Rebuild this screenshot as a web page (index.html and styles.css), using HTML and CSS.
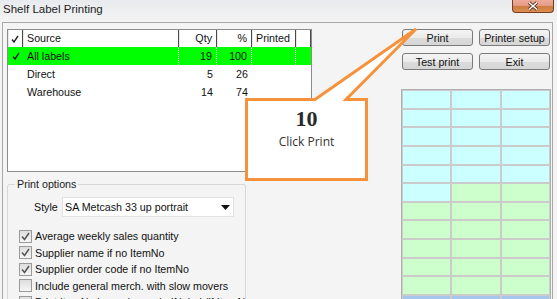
FILE: index.html
```html
<!DOCTYPE html>
<html lang="en">
<head>
  <meta charset="UTF-8" />
  <title>Shelf Label Printing</title>
  <link rel="stylesheet" href="styles.css">
</head>
<body>
  <div class="titlebar">
    <span class="title">Shelf Label Printing</span>
    <span class="close-btn">
      <svg width="12" height="10" viewBox="0 0 12 10">
        <path d="M2 1.5 L10 8.5 M10 1.5 L2 8.5" stroke="#5a3020" stroke-width="3.2" fill="none"/>
        <path d="M2 1.5 L10 8.5 M10 1.5 L2 8.5" stroke="#fff" stroke-width="1.6" fill="none"/>
      </svg>
    </span>
  </div>

  <div class="window">
    <div class="left">
      <div class="listview">
        <div class="lv-row lv-head">
          <div class="cell c-chk"><svg class="tick" width="8" height="8" viewBox="0 0 8 8"><path d="M1 4.5 L3 7 L7 1" stroke="#222" stroke-width="1.4" fill="none"/></svg></div>
          <div class="cell c-src">Source</div>
          <div class="cell c-num">Qty</div>
          <div class="cell c-num">%</div>
          <div class="cell c-prt">Printed</div>
          <div class="cell c-end"></div>
        </div>
        <div class="lv-row sel">
          <div class="cell c-chk"><svg class="tick" width="8" height="8" viewBox="0 0 8 8"><path d="M1 4.5 L3 7 L7 1" stroke="#222" stroke-width="1.4" fill="none"/></svg></div>
          <div class="cell c-src">All labels</div>
          <div class="cell c-num">19</div>
          <div class="cell c-num">100</div>
          <div class="cell c-prt"></div>
          <div class="cell c-end"></div>
        </div>
        <div class="lv-row">
          <div class="cell c-chk"></div>
          <div class="cell c-src">Direct</div>
          <div class="cell c-num">5</div>
          <div class="cell c-num">26</div>
          <div class="cell c-prt"></div>
          <div class="cell c-end"></div>
        </div>
        <div class="lv-row">
          <div class="cell c-chk"></div>
          <div class="cell c-src">Warehouse</div>
          <div class="cell c-num">14</div>
          <div class="cell c-num">74</div>
          <div class="cell c-prt"></div>
          <div class="cell c-end"></div>
        </div>
      </div>

      <fieldset class="group">
        <legend>Print options</legend>
        <div class="style-row">
          <span class="style-label">Style</span>
          <div class="combo">
            <span>SA Metcash 33 up portrait</span>
            <svg width="9" height="5" viewBox="0 0 9 5"><path d="M0 0 H9 L4.5 5 Z" fill="#111"/></svg>
          </div>
        </div>
        <div class="chk-row"><span class="chk"><svg width="11" height="11" viewBox="0 0 11 11"><path d="M2 5.5 L4.5 8.5 L9 2" stroke="#555" stroke-width="1.5" fill="none"/></svg></span>Average weekly sales quantity</div>
        <div class="chk-row"><span class="chk"><svg width="11" height="11" viewBox="0 0 11 11"><path d="M2 5.5 L4.5 8.5 L9 2" stroke="#555" stroke-width="1.5" fill="none"/></svg></span>Supplier name if no ItemNo</div>
        <div class="chk-row"><span class="chk"><svg width="11" height="11" viewBox="0 0 11 11"><path d="M2 5.5 L4.5 8.5 L9 2" stroke="#555" stroke-width="1.5" fill="none"/></svg></span>Supplier order code if no ItemNo</div>
        <div class="chk-row"><span class="chk"></span>Include general merch. with slow movers</div>
        <div class="chk-row"><span class="chk"></span>Print ItemNo barcode on shelf label (if ItemNo)</div>
      </fieldset>
    </div>

    <div class="right">
      <div class="buttons">
        <button>Print</button>
        <button>Printer setup</button>
        <button>Test print</button>
        <button>Exit</button>
      </div>
      <div class="preview">
        <div class="lbl cy"></div><div class="lbl cy"></div><div class="lbl cy"></div>
        <div class="lbl cy"></div><div class="lbl cy"></div><div class="lbl cy"></div>
        <div class="lbl cy"></div><div class="lbl cy"></div><div class="lbl cy"></div>
        <div class="lbl cy"></div><div class="lbl cy"></div><div class="lbl cy"></div>
        <div class="lbl cy"></div><div class="lbl cy"></div><div class="lbl cy"></div>
        <div class="lbl cy"></div><div class="lbl gr"></div><div class="lbl gr"></div>
        <div class="lbl gr"></div><div class="lbl gr"></div><div class="lbl gr"></div>
        <div class="lbl gr"></div><div class="lbl gr"></div><div class="lbl gr"></div>
        <div class="lbl gr"></div><div class="lbl gr"></div><div class="lbl gr"></div>
        <div class="lbl gr"></div><div class="lbl gr"></div><div class="lbl gr"></div>
        <div class="lbl gr"></div><div class="lbl gr"></div><div class="lbl gr"></div>
        <div class="lbl bl"></div><div class="lbl bl"></div><div class="lbl bl"></div>
      </div>
    </div>
  </div>

  <div class="callout">
    <svg width="557" height="299" viewBox="0 0 557 299">
      <polygon points="246.5,99.5 315,99.5 416,29 346,99.5 366.5,99.5 366.5,179.5 246.5,179.5"
               fill="#fff" stroke="#f7923c" stroke-width="3" stroke-linejoin="miter"/>
    </svg>
    <div class="callout-text">
      <div class="step">10</div>
      <div class="hint">Click Print</div>
    </div>
  </div>
</body>
</html>
```

FILE: styles.css
```css
* { box-sizing: border-box; }
body {
  margin: 0;
  width: 557px;
  height: 299px;
  overflow: hidden;
  position: relative;
  background: #f4f4f4;
  font-family: "Liberation Sans", Arial, sans-serif;
  font-size: 10.7px;
  color: #111;
}
.titlebar {
  height: 22px;
  display: flex;
  justify-content: space-between;
  align-items: flex-start;
  background: linear-gradient(to bottom, #e8ebee, #f3f3f3);
}
.title {
  font-size: 11.5px;
  line-height: 14px;
  padding: 2px 0 0 3px;
  color: #222;
}
.close-btn {
  width: 42px;
  height: 13px;
  margin-right: 3px;
  border: 1px solid #7a3b25;
  border-top: none;
  border-radius: 0 0 4px 4px;
  background: linear-gradient(to bottom, #eeaa98 0%, #e49c86 45%, #cf7a40 55%, #da9050 100%);
  display: flex;
  align-items: center;
  justify-content: center;
}
.window {
  display: flex;
  height: 277px;
  overflow: hidden;
  margin: 0 4px 0 2px;
  padding: 6px 1px 0 4px;
  border: 1px solid #a9a9a9;
  border-bottom: none;
  background: #f4f4f4;
}
.left {
  width: 305px;
  flex: none;
}
.listview {
  height: 143px;
  border: 1px solid #8c8c8c;
  background: #fff;
}
.lv-row {
  display: grid;
  grid-template-columns: 15px 156px 38px 35px 44px 1fr;
  height: 18px;
  line-height: 18px;
}
.lv-head {
  height: 17px;
  line-height: 17px;
}
.lv-head .cell {
  border-right: 1px solid #4a4a4a;
  box-shadow: inset 1px 0 0 #e8e8e8;
}
.cell {
  white-space: nowrap;
  overflow: hidden;
}
.c-chk {
  display: flex;
  align-items: center;
  justify-content: center;
}
.c-src { padding-left: 4px; }
.c-num {
  text-align: right;
  padding-right: 4px;
}
.c-prt { padding-left: 4px; }
.sel .cell {
  background: #00ff00;
  border-right: 1px dotted #e6ffe6;
}
.sel .c-chk { border-right: none; }
.sel .c-end { border-right: none; }
.group {
  width: 239px;
  height: 126px;
  margin: 6px 0 0;
  padding: 0 0 0 7px;
  min-width: 0;
  overflow: hidden;
  border: 1px solid #d8d8d8;
  border-bottom: none;
  border-radius: 3px 3px 0 0;
}
.group legend {
  padding: 0 2px;
  line-height: 13px;
  color: #222;
}
.style-row {
  display: flex;
  align-items: center;
  height: 20px;
  margin-top: 6px;
}
.style-label {
  width: 28px;
  margin-left: 19px;
}
.combo {
  width: 172px;
  height: 20px;
  display: flex;
  align-items: center;
  justify-content: space-between;
  padding: 0 3px 0 2px;
  border: 1px solid #e2e2e2;
  background: #fff;
}
.chk-row {
  display: flex;
  align-items: center;
  height: 16.5px;
  white-space: nowrap;
}
.style-row + .chk-row { margin-top: 11px; }
.chk {
  width: 13px;
  height: 13px;
  margin: 0 3px 0 4px;
  flex: none;
  border: 1px solid #9a9a9a;
  background: linear-gradient(to bottom, #dedede, #f6f6f6);
  display: flex;
  align-items: center;
  justify-content: center;
}
.right {
  width: 150px;
  margin-left: 89px;
  flex: none;
}
.buttons {
  display: grid;
  grid-template-columns: 71px 71px;
  gap: 7px 6px;
  padding-left: 1px;
}
.buttons button {
  height: 17px;
  padding: 0;
  font-family: inherit;
  font-size: 10.7px;
  color: #111;
  border: 1px solid #7a7a7a;
  border-radius: 3px;
  background: linear-gradient(to bottom, #f4f4f4 0%, #ebebeb 50%, #dcdcdc 51%, #d6d6d6 100%);
}
.preview {
  margin-top: 19px;
  height: 220px;
  display: grid;
  grid-template-columns: repeat(3, 1fr);
  grid-template-rows: repeat(12, 16.65px);
  gap: 2px;
  padding: 1px;
  border: 1px solid #b0b0b0;
  border-bottom: none;
  background: #cbcbcb;
}
.lbl.cy { background: #ccffff; }
.lbl.gr { background: #ccffcc; }
.lbl.bl { background: #a6c6ee; }
.callout {
  position: absolute;
  left: 0;
  top: 0;
  width: 557px;
  height: 299px;
  pointer-events: none;
}
.callout svg {
  position: absolute;
  left: 0;
  top: 0;
}
.callout-text {
  position: absolute;
  left: 248px;
  top: 108px;
  width: 117px;
  text-align: center;
  color: #333;
}
.step {
  font-family: "Liberation Serif", "Times New Roman", serif;
  font-weight: bold;
  font-size: 22px;
  line-height: 22px;
  color: #2a2a2a;
}
.hint {
  margin-top: 5px;
  font-family: "Open Sans", sans-serif;
  font-size: 12px;
  line-height: 14px;
}
```
